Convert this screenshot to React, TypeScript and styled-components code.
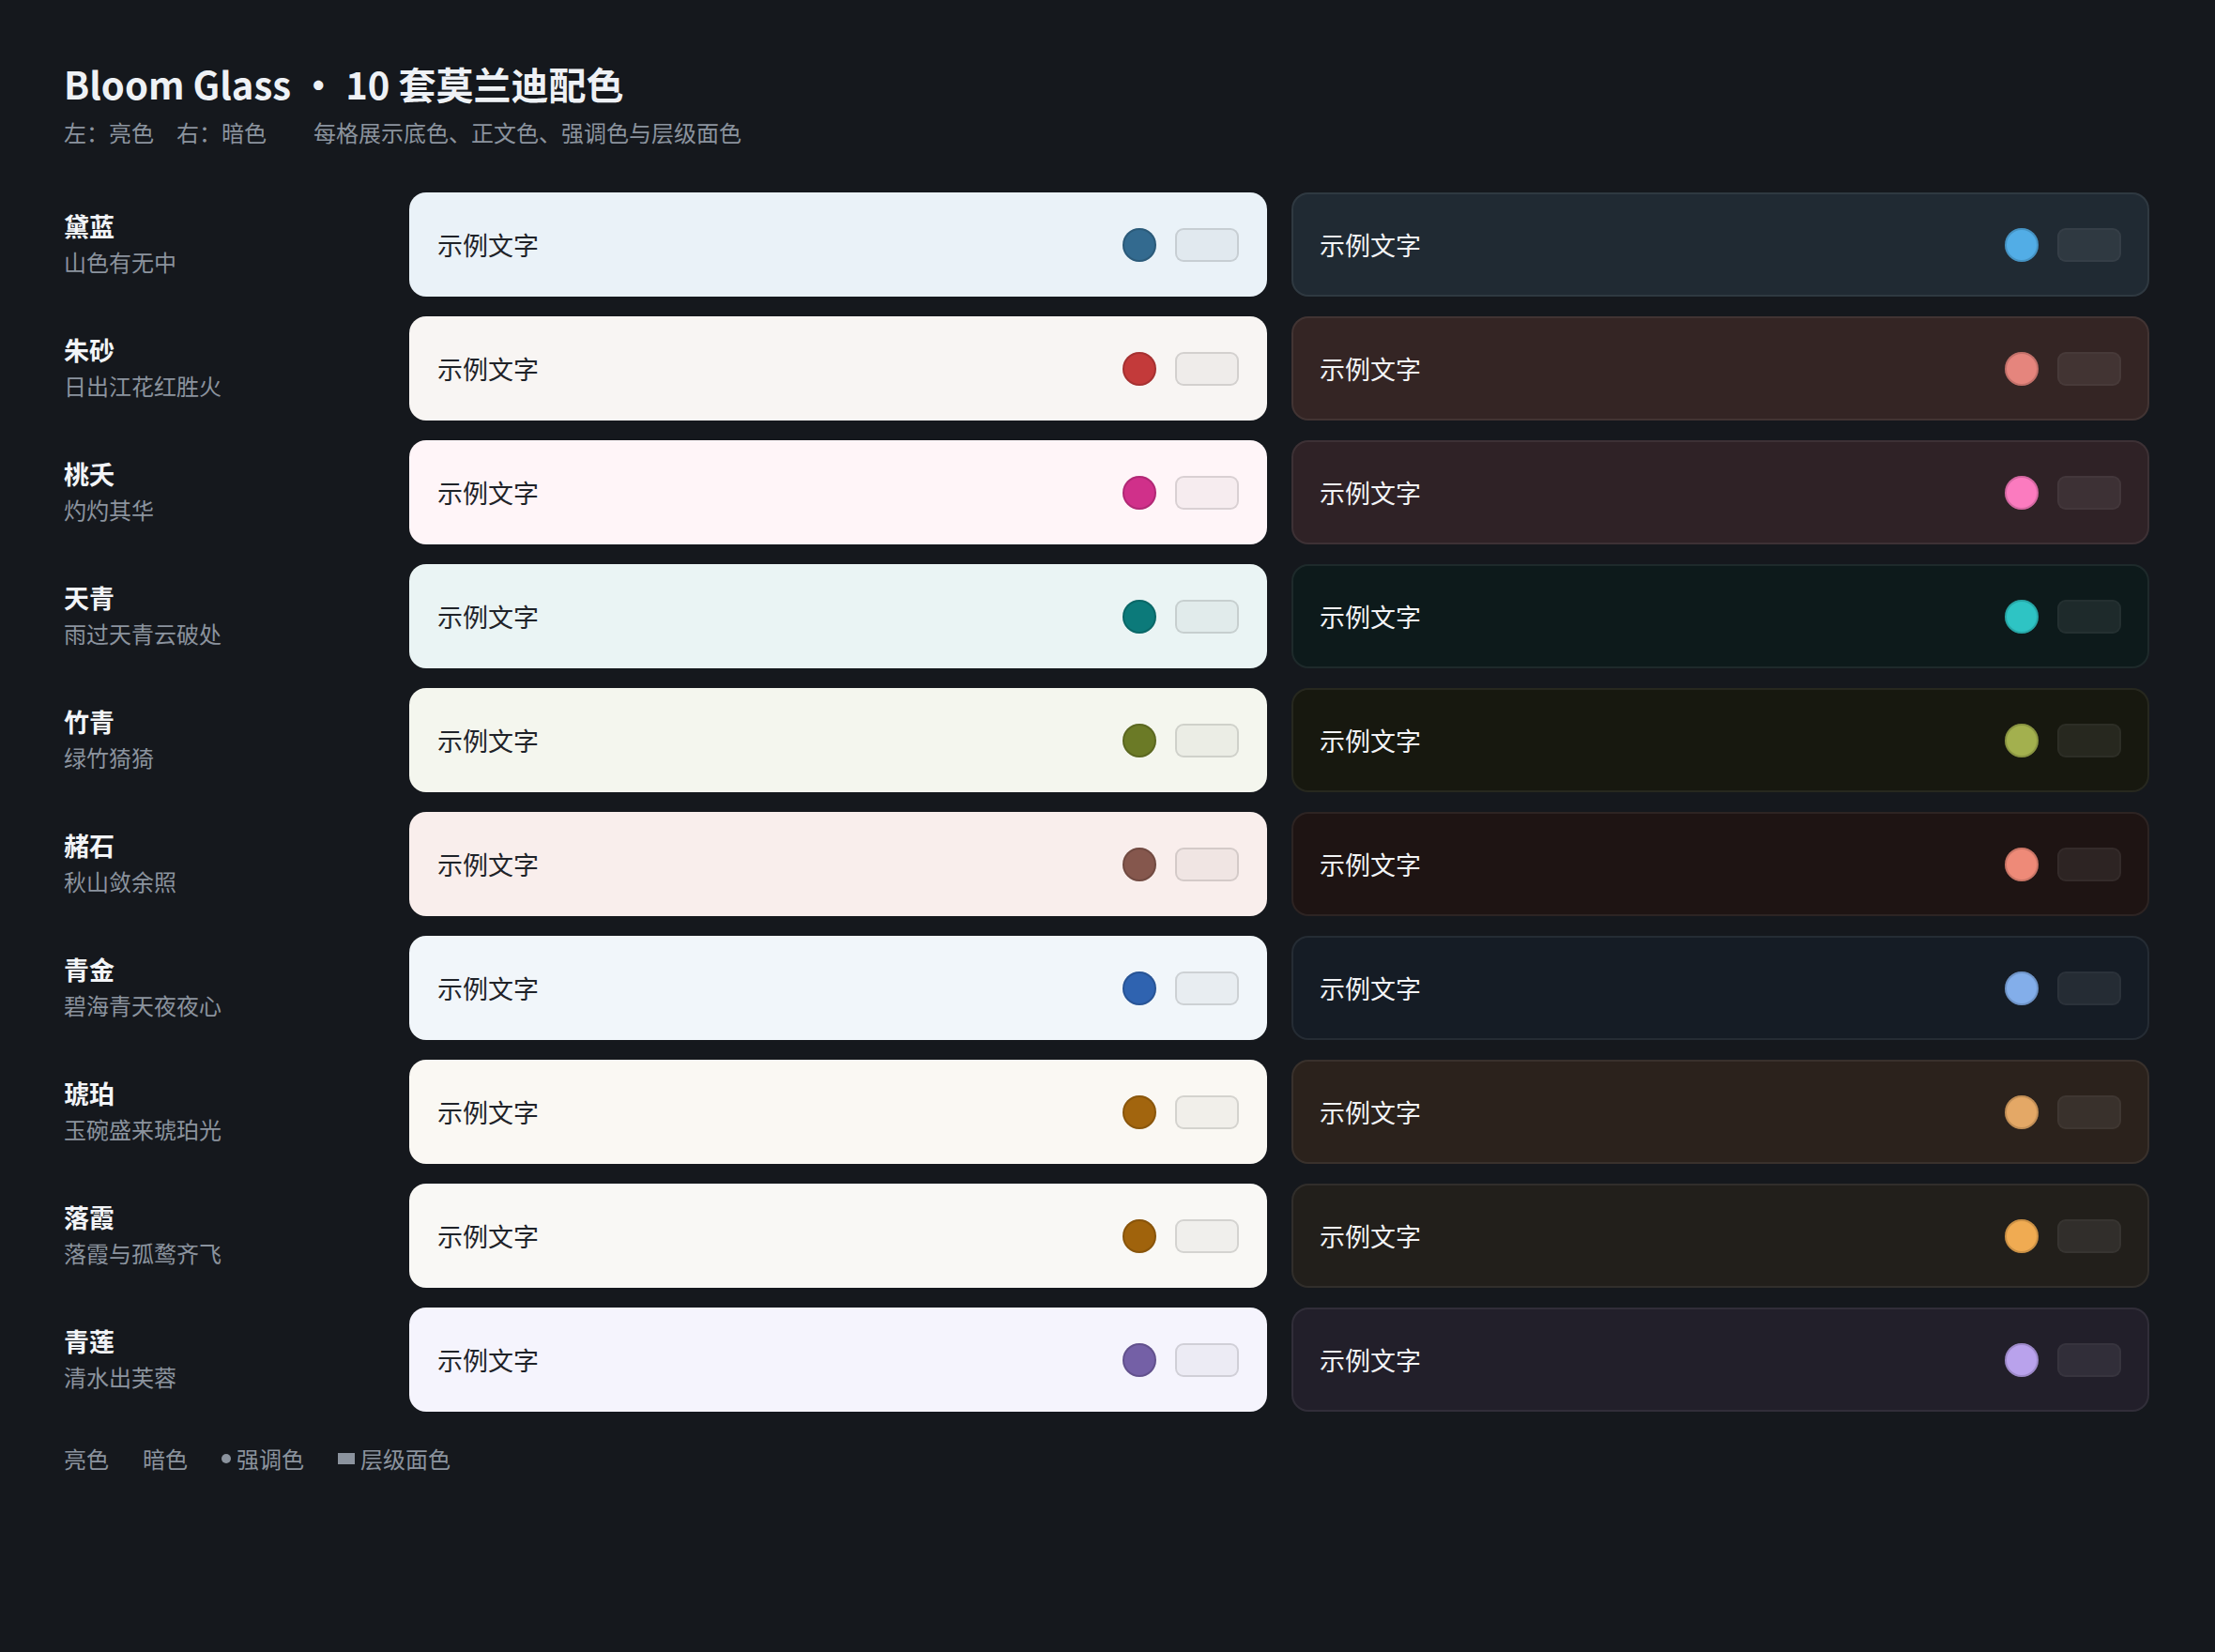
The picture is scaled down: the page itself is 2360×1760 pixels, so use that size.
import React from "react";
import styled, { createGlobalStyle } from "styled-components";

const Global = createGlobalStyle`
  html, body { margin: 0; padding: 0; background: #15181d; }
  body { font-family: "Noto Sans CJK SC", "Noto Sans", sans-serif; }
`;

const Page = styled.div`
  min-height: 1760px;
  box-sizing: border-box;
  padding: 60px 70px 0 68px;
  background: #15181d;
`;
const Title = styled.h1`
  margin: 0;
  font-size: 40px;
  line-height: 58px;
  font-weight: 700;
  color: #eef1f5;
`;
const Sub = styled.div`
  margin-top: 6px;
  font-size: 24px;
  line-height: 34px;
  color: #8b939e;
  display: flex;
  gap: 50px;
`;
const Grid = styled.div`
  margin-top: 47px;
  display: grid;
  grid-template-columns: 342px 1fr 1fr;
  column-gap: 26px;
  row-gap: 21px;
`;
const Label = styled.div`
  display: flex;
  flex-direction: column;
  justify-content: center;
  gap: 4px;
  padding-bottom: 4px;
`;
const Name = styled.div`
  font-size: 27px;
  line-height: 36px;
  font-weight: 700;
  color: #f2f4f7;
`;
const Poem = styled.div`
  font-size: 24px;
  line-height: 32px;
  color: #8b939e;
`;
const Card = styled.div<{ $bg: string; $dark?: boolean }>`
  height: 111px;
  box-sizing: border-box;
  border-radius: 18px;
  background: ${(p) => p.$bg};
  border: 2px solid ${(p) => (p.$dark ? "rgba(255,255,255,0.07)" : "transparent")};
  display: flex;
  align-items: center;
  padding: 0 28px 0 28px;
  gap: 20px;
`;
const Sample = styled.div<{ $dark?: boolean }>`
  flex: 1;
  font-size: 27px;
  color: ${(p) => (p.$dark ? "#f3f4f6" : "#1f2329")};
`;
const Dot = styled.div<{ $c: string }>`
  width: 36px;
  height: 36px;
  border-radius: 50%;
  background: ${(p) => p.$c};
  box-shadow: inset 0 0 0 2px rgba(0, 0, 0, 0.15);
`;
const Chip = styled.div<{ $dark?: boolean }>`
  width: 68px;
  height: 36px;
  box-sizing: border-box;
  border-radius: 9px;
  background: ${(p) => (p.$dark ? "rgba(255,255,255,0.07)" : "rgba(0,0,0,0.035)")};
  border: 2px solid ${(p) => (p.$dark ? "rgba(255,255,255,0.03)" : "rgba(0,0,0,0.12)")};
`;
const Footer = styled.div`
  margin-top: 32px;
  display: flex;
  align-items: center;
  gap: 36px;
  font-size: 24px;
  color: #8b939e;
`;
const Legend = styled.span`
  display: inline-flex;
  align-items: center;
  gap: 6px;
`;
const LegendDot = styled.span`
  width: 10px;
  height: 10px;
  border-radius: 50%;
  background: #8b939e;
`;
const LegendSq = styled.span`
  width: 18px;
  height: 12px;
  background: #8b939e;
`;

const palettes = [
  ["黛蓝", "山色有无中", "#eaf2f8", "#336a8f", "#202a33", "#52ade6"],
  ["朱砂", "日出江花红胜火", "#f8f5f3", "#c33a3a", "#342524", "#e5857d"],
  ["桃夭", "灼灼其华", "#fff5f8", "#d0308a", "#2f2226", "#fb7bbf"],
  ["天青", "雨过天青云破处", "#eaf4f4", "#0c7a7a", "#0d1a1b", "#2ec4c4"],
  ["竹青", "绿竹猗猗", "#f4f6ee", "#6b7a26", "#17180f", "#a3b04e"],
  ["赭石", "秋山敛余照", "#f9eeec", "#85574d", "#1e1413", "#ee8a78"],
  ["青金", "碧海青天夜夜心", "#f1f6fa", "#2f63b0", "#151c25", "#83aeea"],
  ["琥珀", "玉碗盛来琥珀光", "#faf8f3", "#a2650e", "#2b221c", "#e4a866"],
  ["落霞", "落霞与孤鹜齐飞", "#f9f8f5", "#a0630c", "#221f1b", "#f0ab52"],
  ["青莲", "清水出芙蓉", "#f5f4fd", "#7460a6", "#221f2a", "#b9a2ec"],
];

export default function App() {
  return (
    <Page>
      <Global />
      <Title>Bloom Glass • 10 套莫兰迪配色</Title>
      <Sub>
        <span>左：亮色　右：暗色</span>
        <span>每格展示底色、正文色、强调色与层级面色</span>
      </Sub>
      <Grid>
        {palettes.map(([n, p, lb, la, db, da]) => (
          <React.Fragment key={n}>
            <Label>
              <Name>{n}</Name>
              <Poem>{p}</Poem>
            </Label>
            <Card $bg={lb}>
              <Sample>示例文字</Sample>
              <Dot $c={la} />
              <Chip />
            </Card>
            <Card $bg={db} $dark>
              <Sample $dark>示例文字</Sample>
              <Dot $c={da} />
              <Chip $dark />
            </Card>
          </React.Fragment>
        ))}
      </Grid>
      <Footer>
        <span>亮色</span>
        <span>暗色</span>
        <Legend><LegendDot />强调色</Legend>
        <Legend><LegendSq />层级面色</Legend>
      </Footer>
    </Page>
  );
}
